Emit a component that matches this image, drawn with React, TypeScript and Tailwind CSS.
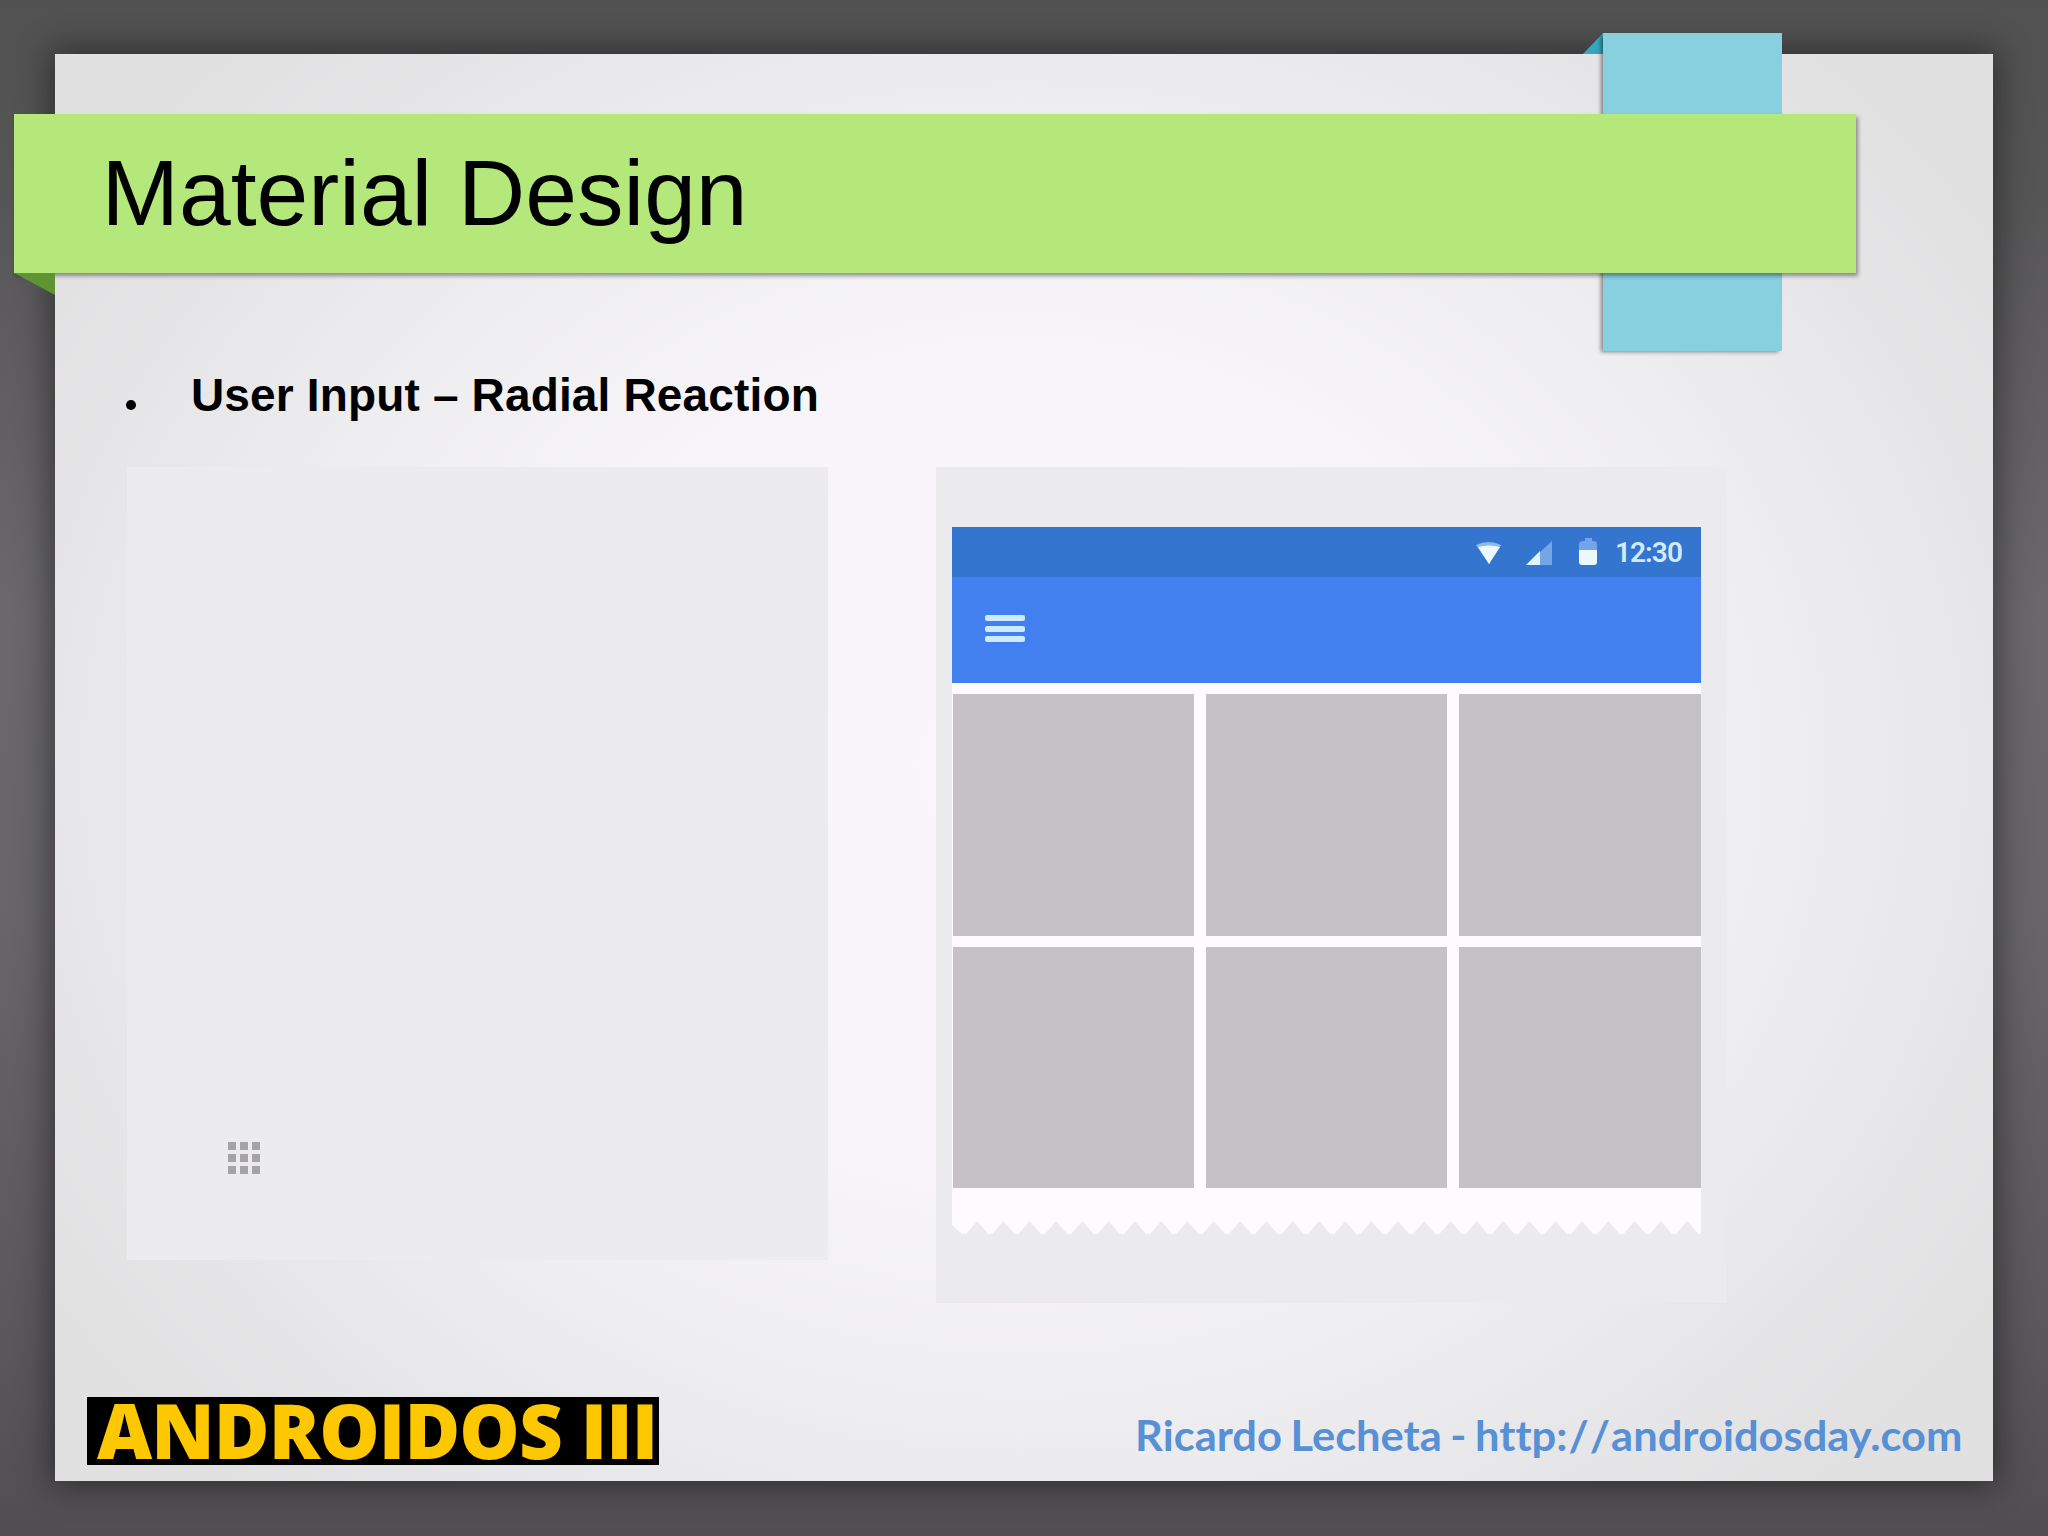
import clsx from "clsx";

const TOOTH = 26.3;

// torn paper edge under the photo grid
function tornEdgePoints() {
  const points = ["0,0", "749,0", "749,14"];
  for (let i = 28; i >= 0; i--) {
    const tip = 12 + i * TOOTH;
    if (i < 28) points.push(`${tip + TOOTH / 2},0`);
    points.push(`${tip + 2},13`, `${tip - 2},13`);
  }
  points.push("0,4");
  return points.join(" ");
}

function StatusBar() {
  return (
    <div className="flex h-[50px] items-center bg-[#3475d0] pr-[19px] text-[#d3e9fd]">
      <svg className="ml-auto h-[50px] w-[138px]" viewBox="0 0 138 50">
        <path d="M3 18 Q15.500 12 28 18 L16 37 Z" fill="#8db9ee" />
        <path d="M5 20 Q15.500 17 27 20 L16 37 Z" fill="#eef9ff" />
        <path d="M79 14 V38 H53 Z" fill="#74a5e6" />
        <path d="M67 24 V38 H53 Z" fill="#dff4ff" />
        <path d="M110 14 H112 V11 H119 V14 H121 Q124 14 124 18 V24 H106 V18 Q106 14 110 14Z" fill="#76a4ea" />
        <path d="M106 23 H124 V35 Q124 38 121 38 H109 Q106 38 106 35Z" fill="#ecf8ff" />
      </svg>
      <span className="mt-[2px] ml-[4px] font-[Roboto,sans-serif] text-[28px] leading-[50px] font-semibold tracking-[-0.9px]">
        12:30
      </span>
    </div>
  );
}

function Phone() {
  return (
    <div className="w-[749px]">
      <StatusBar />
      <div className="flex h-[106px] flex-col gap-[4.5px] bg-[#4180ee] pt-[38px] pl-[33px]">
        {[0, 1, 2].map((line) => (
          <span key={line} className="h-[6px] w-[40px] rounded-[2px] bg-[#cdebff]" />
        ))}
      </div>
      <div className="grid h-[505px] grid-cols-[242px_241px_242px] grid-rows-[242px_241px] justify-between gap-y-[11px] bg-[#fdfbfe] pt-[11px]">
        {[0, 1, 2, 3, 4, 5].map((cell) => (
          <div key={cell} className={clsx("bg-[#c4c2c5]", cell % 3 === 0 && "ml-px")} />
        ))}
      </div>
      <div className="h-[33px] bg-[#fdfbfe]" />
      <svg className="block h-[16px] w-[749px]" viewBox="0 0 749 16">
        <polygon points={tornEdgePoints()} fill="#fdfbfe" />
      </svg>
    </div>
  );
}

function AppsIcon() {
  return (
    <div className="grid w-[32px] grid-cols-3 gap-[4px]">
      {Array.from({ length: 9 }, (_, i) => (
        <span key={i} className="h-[8px] bg-[#a5a3a6]" />
      ))}
    </div>
  );
}

function Tape() {
  return (
    <div className="absolute -top-[21px] left-[1548px] flex">
      <svg className="-ml-[20px] h-[21px] w-[20px]" viewBox="0 0 20 21">
        <path d="M20 0 V21 H0 Z" fill="#38a5ba" />
      </svg>
      <div className="h-[318px] w-[179px] bg-[#88cfe0] shadow-[-3px_2px_4px_-1px_rgba(0,0,0,0.45)]" />
    </div>
  );
}

export default function App() {
  return (
    <div className="h-[1536px] w-[2048px] overflow-hidden bg-[linear-gradient(180deg,#515151_0%,#565556_12%,#626063_28%,#6a686b_40%,#676568_60%,#59575b_88%,#514e52_100%)] px-[55px] pt-[54px] font-['Liberation_Sans',Arial,sans-serif] text-black">
      <main className="relative flex h-[1427px] w-[1938px] flex-col bg-[radial-gradient(ellipse_1150px_980px_at_50%_50%,#f9f7fb_0%,#f7f5f9_42%,#eeedef_66%,#e7e6e8_82%,#e1e1e2_100%)] shadow-[0_0_32px_4px_rgba(0,0,0,0.45)]">
        <Tape />
        <header className="relative mt-[60px] -ml-[41px] flex h-[159px] w-[1842px] shrink-0 items-center bg-[#b5e87b] pl-[87.5px] shadow-[2px_3px_4px_rgba(0,0,0,0.4)]">
          <h1 className="text-[93px] leading-none whitespace-nowrap">Material Design</h1>
          <svg className="absolute top-[159px] left-0 h-[22px] w-[41px]" viewBox="0 0 41 22">
            <path d="M0 0 H41 V22 Z" fill="#5f9433" />
          </svg>
        </header>

        <section className="flex flex-col pl-[72px]">
          <h2 className="mt-[92px] flex h-[60px] items-center">
            <span className="mt-[20px] -ml-px size-[10px] rounded-full bg-black" />
            <span className="ml-[55px] text-[46px] leading-none font-bold tracking-[0.15px] whitespace-nowrap">
              User Input – Radial Reaction
            </span>
          </h2>
          <div className="mt-[42px] flex items-start gap-[108px]">
            <div className="flex h-[793px] w-[701px] items-end bg-[#ecebed] pb-[86px] pl-[101px]">
              <AppsIcon />
            </div>
            <div className="h-[836px] w-[791px] bg-[#ebeaec] pt-[60px] pl-[16px]">
              <Phone />
            </div>
          </div>
        </section>

        <footer className="mt-[94px] flex h-[68px] items-center pl-[32px]">
          <div className="flex h-[68px] w-[572px] items-center bg-black pl-[10px]">
            <span className="-mt-[3px] font-['Open_Sans',sans-serif] text-[76px] leading-none font-extrabold tracking-[-0.9px] whitespace-nowrap text-[#fdc800]">
              ANDROIDOS III
            </span>
          </div>
          <span className="mt-[8px] ml-[476px] origin-left scale-x-[1.035] font-[Lato,sans-serif] text-[42px] leading-none font-bold [word-spacing:-2px] whitespace-nowrap text-[#5790d5] [font-variant-ligatures:none]">
            Ricardo Lecheta - http<span className="tracking-[1px] [font-kerning:none]">://</span>androidosday.com
          </span>
        </footer>
      </main>
    </div>
  );
}
